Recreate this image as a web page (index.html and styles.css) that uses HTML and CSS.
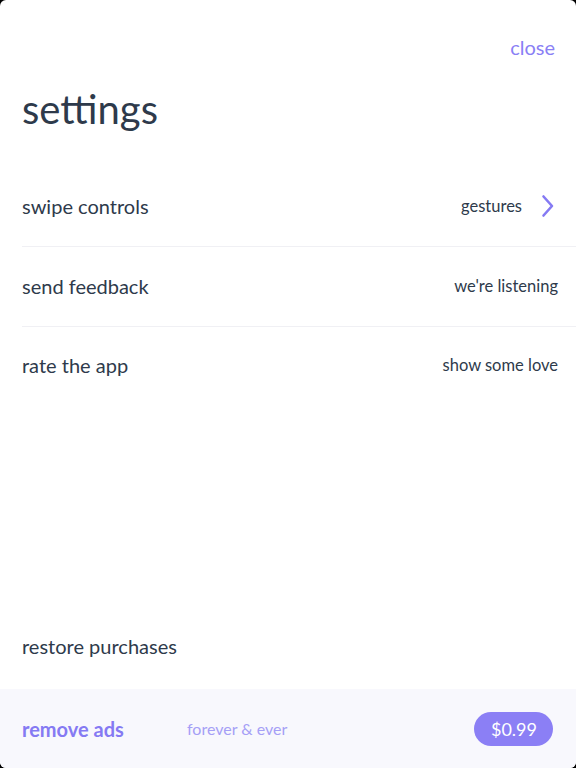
FILE: index.html
```html
<!DOCTYPE html>
<html lang="en">
<head>
<meta charset="utf-8">
<title>settings</title>
<link rel="stylesheet" href="styles.css">
</head>
<body>
<div class="sheet">
  <div class="topbar">
    <span class="close">close</span>
  </div>
  <h1 class="title">settings</h1>
  <ul class="list">
    <li class="row">
      <span class="label">swipe controls</span>
      <span class="detail">gestures
        <svg class="chev" width="14" height="24" viewBox="0 0 14 24"><path d="M2.5 2.5 L11 12 L2.5 21.5" fill="none" stroke="#857af3" stroke-width="2.6" stroke-linecap="round" stroke-linejoin="round"/></svg>
      </span>
    </li>
    <li class="row">
      <span class="label">send feedback</span>
      <span class="detail">we're listening</span>
    </li>
    <li class="row">
      <span class="label">rate the app</span>
      <span class="detail">show some love</span>
    </li>
  </ul>
  <div class="spacer"></div>
  <div class="row restore">
    <span class="label">restore purchases</span>
  </div>
  <div class="promo">
    <span class="promo-title">remove ads</span>
    <span class="promo-sub">forever &amp; ever</span>
    <span class="price">$0.99</span>
  </div>
</div>
</body>
</html>
```
FILE: styles.css
```css
html, body {
  margin: 0;
  padding: 0;
  background: #000;
}
.sheet {
  width: 576px;
  height: 768px;
  background: #fff;
  border-radius: 6px;
  overflow: hidden;
  display: flex;
  flex-direction: column;
  font-family: Lato, "Open Sans", sans-serif;
  color: #2e3a4b;
}
.topbar {
  display: flex;
  justify-content: flex-end;
  padding: 35px 21px 0 0;
  height: 24px;
}
.close {
  font-size: 20px;
  line-height: 24px;
  color: #8a80f5;
}
.title {
  margin: 0;
  padding: 24px 0 0 22px;
  font-size: 40px;
  line-height: 52px;
  font-weight: 400;
  box-sizing: border-box;
  height: 108px;
}
.list {
  list-style: none;
  margin: 0;
  padding: 0;
}
.row {
  display: flex;
  align-items: center;
  justify-content: space-between;
  height: 80px;
  margin-left: 22px;
  padding: 0 18px 2px 0;
  border-bottom: 1px solid #f0f0f4;
  box-sizing: border-box;
}
.list .row:last-child {
  border-bottom: none;
  padding-bottom: 4px;
}
.restore {
  border-bottom: none;
  height: 81px;
  padding-bottom: 6px;
}
.label {
  font-size: 20px;
}
.detail {
  display: flex;
  align-items: center;
  font-size: 16.5px;
}
.chev {
  margin-left: 19px;
  margin-right: 3px;
}
.spacer {
  flex: 1;
}
.promo {
  height: 79px;
  flex: none;
  background: #f8f8fd;
  display: flex;
  align-items: center;
  padding: 0 23px 0 22px;
}
.promo-title {
  font-size: 20px;
  font-weight: 700;
  color: #857af3;
  width: 165px;
}
.promo-sub {
  font-size: 16px;
  color: #a59ff6;
  flex: 1;
}
.price {
  background: #8b7ff5;
  color: #fff;
  font-size: 18px;
  border-radius: 17px;
  height: 34px;
  line-height: 34px;
  padding: 0 16px 0 17px;
  margin-left: 2px;
}
```
